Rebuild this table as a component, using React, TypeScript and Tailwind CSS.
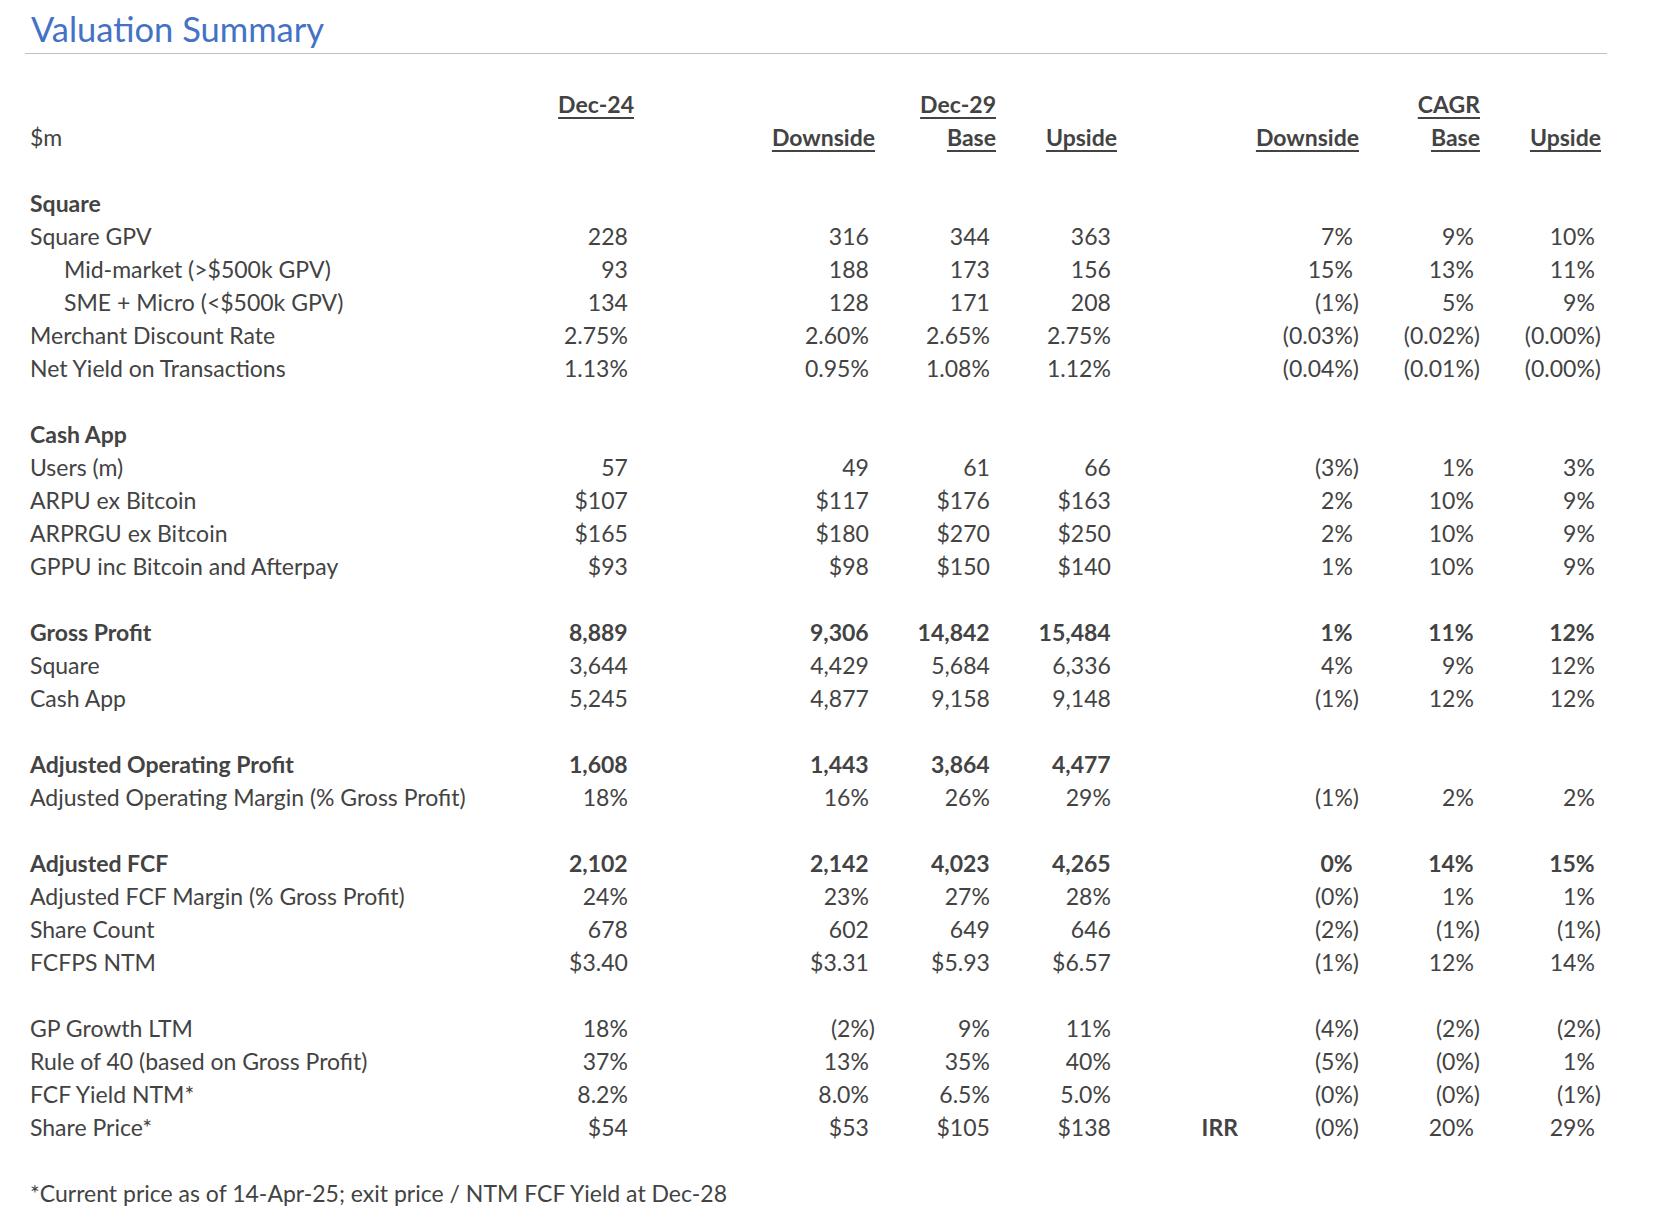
import React from "react";

type Row = {
  label?: string;
  bold?: boolean;
  indent?: boolean;
  v?: string[];
  irr?: boolean;
};

const rows: Row[] = [
  { label: "Square", bold: true },
  { label: "Square GPV", v: ["228", "316", "344", "363", "7%", "9%", "10%"] },
  { label: "Mid-market (>$500k GPV)", indent: true, v: ["93", "188", "173", "156", "15%", "13%", "11%"] },
  { label: "SME + Micro (<$500k GPV)", indent: true, v: ["134", "128", "171", "208", "(1%)", "5%", "9%"] },
  { label: "Merchant Discount Rate", v: ["2.75%", "2.60%", "2.65%", "2.75%", "(0.03%)", "(0.02%)", "(0.00%)"] },
  { label: "Net Yield on Transactions", v: ["1.13%", "0.95%", "1.08%", "1.12%", "(0.04%)", "(0.01%)", "(0.00%)"] },
  {},
  { label: "Cash App", bold: true },
  { label: "Users (m)", v: ["57", "49", "61", "66", "(3%)", "1%", "3%"] },
  { label: "ARPU ex Bitcoin", v: ["$107", "$117", "$176", "$163", "2%", "10%", "9%"] },
  { label: "ARPRGU ex Bitcoin", v: ["$165", "$180", "$270", "$250", "2%", "10%", "9%"] },
  { label: "GPPU inc Bitcoin and Afterpay", v: ["$93", "$98", "$150", "$140", "1%", "10%", "9%"] },
  {},
  { label: "Gross Profit", bold: true, v: ["8,889", "9,306", "14,842", "15,484", "1%", "11%", "12%"] },
  { label: "Square", v: ["3,644", "4,429", "5,684", "6,336", "4%", "9%", "12%"] },
  { label: "Cash App", v: ["5,245", "4,877", "9,158", "9,148", "(1%)", "12%", "12%"] },
  {},
  { label: "Adjusted Operating Profit", bold: true, v: ["1,608", "1,443", "3,864", "4,477", "", "", ""] },
  { label: "Adjusted Operating Margin (% Gross Profit)", v: ["18%", "16%", "26%", "29%", "(1%)", "2%", "2%"] },
  {},
  { label: "Adjusted FCF", bold: true, v: ["2,102", "2,142", "4,023", "4,265", "0%", "14%", "15%"] },
  { label: "Adjusted FCF Margin (% Gross Profit)", v: ["24%", "23%", "27%", "28%", "(0%)", "1%", "1%"] },
  { label: "Share Count", v: ["678", "602", "649", "646", "(2%)", "(1%)", "(1%)"] },
  { label: "FCFPS NTM", v: ["$3.40", "$3.31", "$5.93", "$6.57", "(1%)", "12%", "14%"] },
  {},
  { label: "GP Growth LTM", v: ["18%", "(2%)", "9%", "11%", "(4%)", "(2%)", "(2%)"] },
  { label: "Rule of 40 (based on Gross Profit)", v: ["37%", "13%", "35%", "40%", "(5%)", "(0%)", "1%"] },
  { label: "FCF Yield NTM*", v: ["8.2%", "8.0%", "6.5%", "5.0%", "(0%)", "(0%)", "(1%)"] },
  { label: "Share Price*", v: ["$54", "$53", "$105", "$138", "(0%)", "20%", "29%"], irr: true },
  {},
];

const grid =
  "grid grid-cols-[483px_121px_120px_121px_121px_121px_121px_121px_121px_121px] h-[33px] items-center";

const Num = ({ s }: { s?: string }) => {
  if (!s) return <div />;
  return (
    <div className="text-right whitespace-nowrap">
      {s}
      {!s.startsWith("(") && <span className="invisible">)</span>}
    </div>
  );
};

const Head = ({ children }: { children?: React.ReactNode }) => (
  <div className="text-right font-bold">
    {children && (
      <span className="underline decoration-2 underline-offset-[4px]">{children}</span>
    )}
  </div>
);

export default function App() {
  return (
    <div className="w-[1653px] h-[1226px] bg-white text-[#434343] font-['Lato',sans-serif] text-[23px] leading-[1.2]">
      {/* Title */}
      <div className="ml-[25px] w-[1582px] h-[54px] border-b border-[#bfbfbf] pt-[8px] pl-[6px]">
        <h1 className="text-[34.5px] leading-[1.2] text-[#4472c4]">Valuation Summary</h1>
      </div>

      <div className="ml-[30px] mt-[34px]">
        {/* Header rows */}
        <div className={grid}>
          <div />
          <Head>Dec-24</Head>
          <div />
          <div />
          <Head>Dec-29</Head>
          <div />
          <div />
          <div />
          <Head>CAGR</Head>
          <div />
        </div>
        <div className={grid}>
          <div>$m</div>
          <div />
          <div />
          <Head>Downside</Head>
          <Head>Base</Head>
          <Head>Upside</Head>
          <div />
          <Head>Downside</Head>
          <Head>Base</Head>
          <Head>Upside</Head>
        </div>
        <div className="h-[33px]" />

        {rows.map((r, i) => (
          <div key={i} className={`${grid} ${r.bold ? "font-bold" : ""}`}>
            <div className={`whitespace-nowrap ${r.indent ? "pl-[34px]" : ""}`}>{r.label}</div>
            <Num s={r.v?.[0]} />
            <div />
            <Num s={r.v?.[1]} />
            <Num s={r.v?.[2]} />
            <Num s={r.v?.[3]} />
            <div className="text-right font-bold">{r.irr ? "IRR" : ""}</div>
            <Num s={r.v?.[4]} />
            <Num s={r.v?.[5]} />
            <Num s={r.v?.[6]} />
          </div>
        ))}

        <div className="h-[33px] flex items-center">
          *Current price as of 14-Apr-25; exit price / NTM FCF Yield at Dec-28
        </div>
      </div>
    </div>
  );
}
